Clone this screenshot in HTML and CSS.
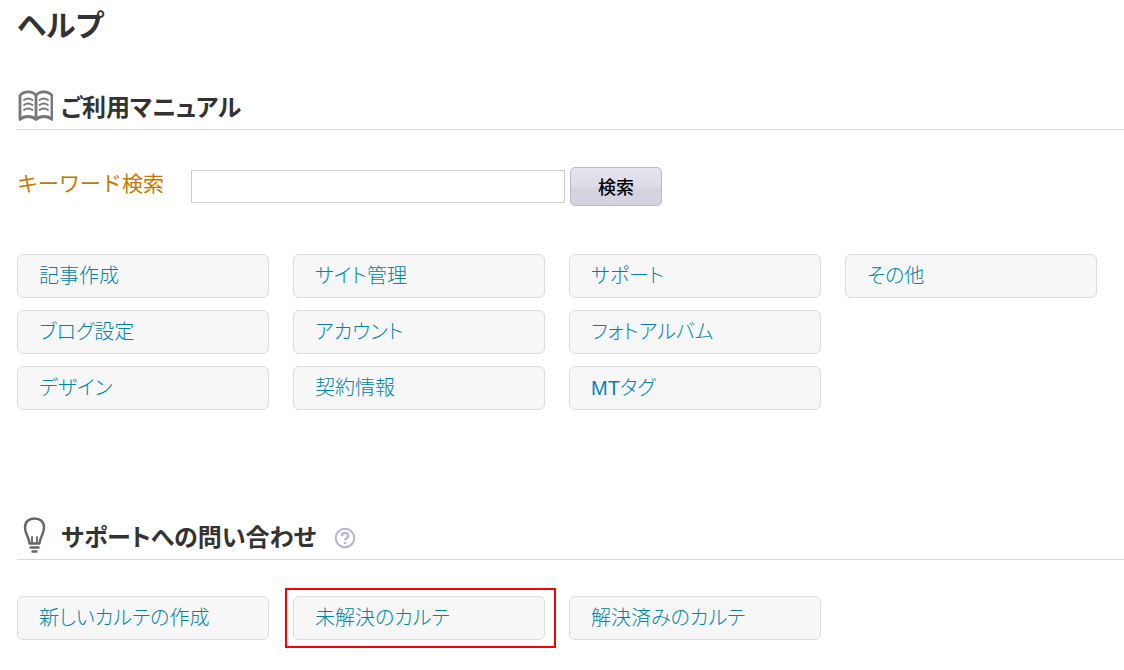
FILE: index.html
```html
<!DOCTYPE html>
<html lang="ja">
<head>
<meta charset="utf-8">
<meta name="viewport" content="width=device-width, initial-scale=1">
<title>ヘルプ</title>
<link rel="stylesheet" href="styles.css">
</head>
<body>
<main class="page">
  <h1 class="page-title">ヘルプ</h1>

  <section class="manual">
    <div class="section-head">
      <svg class="icon-book" viewBox="0 0 36 32" width="36" height="32" aria-hidden="true">
        <path d="M19 5.500C16 .8 7 .4 3 5.500V29.500C7 25.500 15 25.500 19 29.500C23 25.500 31 25.500 35 29.500V5.500C31 .4 22 .8 19 5.500V29.500"/>
        <path class="thin" d="M7 10Q11 7 15.500 10M7 15Q11 12 15.500 15M7 20Q11 17 15.500 20M22.500 10Q27 7 31 10M22.500 15Q27 12 31 15M22.500 20Q27 17 31 20"/>
      </svg>
      <h2 class="section-title">ご利用マニュアル</h2>
    </div>

    <form class="search">
      <label class="search-label" for="keyword">キーワード検索</label>
      <input class="search-input" id="keyword" type="text" name="keyword">
      <button class="search-button" type="submit">検索</button>
    </form>

    <div class="columns">
      <ul class="link-list">
        <li><a class="link-box" href="#">記事作成</a></li>
        <li><a class="link-box" href="#">ブログ設定</a></li>
        <li><a class="link-box" href="#">デザイン</a></li>
      </ul>
      <ul class="link-list">
        <li><a class="link-box" href="#">サイト管理</a></li>
        <li><a class="link-box" href="#">アカウント</a></li>
        <li><a class="link-box" href="#">契約情報</a></li>
      </ul>
      <ul class="link-list">
        <li><a class="link-box" href="#">サポート</a></li>
        <li><a class="link-box" href="#">フォトアルバム</a></li>
        <li><a class="link-box" href="#"><span class="latin">MT</span>タグ</a></li>
      </ul>
      <ul class="link-list">
        <li><a class="link-box" href="#">その他</a></li>
      </ul>
    </div>
  </section>

  <section class="support">
    <div class="section-head">
      <svg class="icon-bulb" viewBox="0 0 36 38" width="36" height="38" aria-hidden="true">
        <path d="M12.500 26.500C12 20 8 17 8 10.500C8 4.500 12 1.500 17.500 1.500S27 4.500 27 10.500C27 17 23 20 22.500 26.500Z"/>
        <path class="thin" d="M15 26V20M20 26V20"/>
        <path d="M13.500 30.500H21.500M15.500 34.500H19.500"/>
      </svg>
      <h2 class="section-title">サポートへの問い合わせ</h2>
      <a class="help" href="#" aria-label="ヘルプ">
        <svg viewBox="0 0 22 22" width="22" height="22" aria-hidden="true">
          <circle cx="11" cy="11" r="9.300"/>
          <path class="mark" d="M7.800 9C7.800 5 14.300 5 14.300 8.700C14.300 11 11 11.200 11 13.300M11 15V17"/>
        </svg>
      </a>
    </div>

    <div class="columns">
      <a class="link-box" href="#">新しいカルテの作成</a>
      <a class="link-box link-box-marked" href="#">未解決のカルテ</a>
      <a class="link-box" href="#">解決済みのカルテ</a>
    </div>
  </section>
</main>
</body>
</html>
```
FILE: styles.css
```css
* {
  box-sizing: border-box;
}

body {
  margin: 0;
  background: #fff;
  color: #333;
  font-family: "Noto Sans CJK JP", sans-serif;
}

.page {
  padding: 3px 0 30px 17px;
}

.page-title {
  margin: 0;
  font-size: 30px;
  line-height: 40px;
  font-weight: 700;
  font-feature-settings: "palt";
}

.section-head {
  display: flex;
  align-items: center;
  height: 46px;
  padding-bottom: 2px;
  border-bottom: 1px solid #d9d9d9;
}

.section-title {
  margin: 0 0 0 8px;
  font-size: 24px;
  line-height: 32px;
  font-weight: 700;
  font-feature-settings: "palt";
}

.icon-book,
.icon-bulb {
  flex: none;
  fill: none;
  stroke: #666;
  stroke-width: 2.4;
  stroke-linecap: round;
  stroke-linejoin: round;
}

.icon-book {
  stroke: #777;
  stroke-width: 2.8;
}

.icon-book .thin,
.icon-bulb .thin {
  stroke-width: 1.8;
}

.manual {
  margin-top: 41px;
}

.support {
  margin-top: 104px;
}

.search {
  display: flex;
  align-items: center;
  margin: 37px 0 48px;
}

.search-label {
  flex: none;
  width: 174px;
  padding-bottom: 9px;
  color: #c77700;
  font-size: 21px;
  line-height: 30px;
  font-weight: 400;
}

.search-input {
  width: 374px;
  height: 33px;
  padding: 0 8px;
  border: 1px solid #ccc;
  background: #fff;
  font: inherit;
  font-size: 18px;
}

.search-button {
  width: 92px;
  height: 39px;
  margin-left: 5px;
  padding: 0 0 2px;
  border: 1px solid #bdbac8;
  border-radius: 5px;
  background: linear-gradient(#e6e4ee, #dedbe8 50%, #d6d3e1 55%, #d6d3e1);
  color: #000;
  font-family: inherit;
  font-size: 18px;
  font-weight: 500;
}

.columns {
  display: grid;
  grid-template-columns: repeat(4, 1fr);
  gap: 24px;
  margin-right: 27px;
}

.support .columns {
  margin-top: 36px;
}

.link-list {
  display: flex;
  flex-direction: column;
  gap: 12px;
  margin: 0;
  padding: 0;
  list-style: none;
}

.link-box {
  display: block;
  position: relative;
  padding: 5px 21px 7px;
  border: 1px solid #ddd;
  border-radius: 6px;
  background: #f7f7f7;
  color: #0084a8;
  font-size: 20px;
  line-height: 30px;
  font-weight: 300;
  font-feature-settings: "palt";
  text-decoration: none;
}

.latin {
  color: #0084b8;
  font-family: "Liberation Sans", Arial, sans-serif;
  line-height: 20px;
  font-weight: 400;
}

.link-box-marked::after {
  content: "";
  position: absolute;
  inset: -9px -12px -9px -9px;
  border: 2px solid #f00;
}

.help {
  margin: 4px 0 0 18px;
}

.help svg {
  display: block;
  fill: none;
  stroke: #b9b1da;
  stroke-width: 2;
}

.help .mark {
  stroke-width: 2.4;
}
```
